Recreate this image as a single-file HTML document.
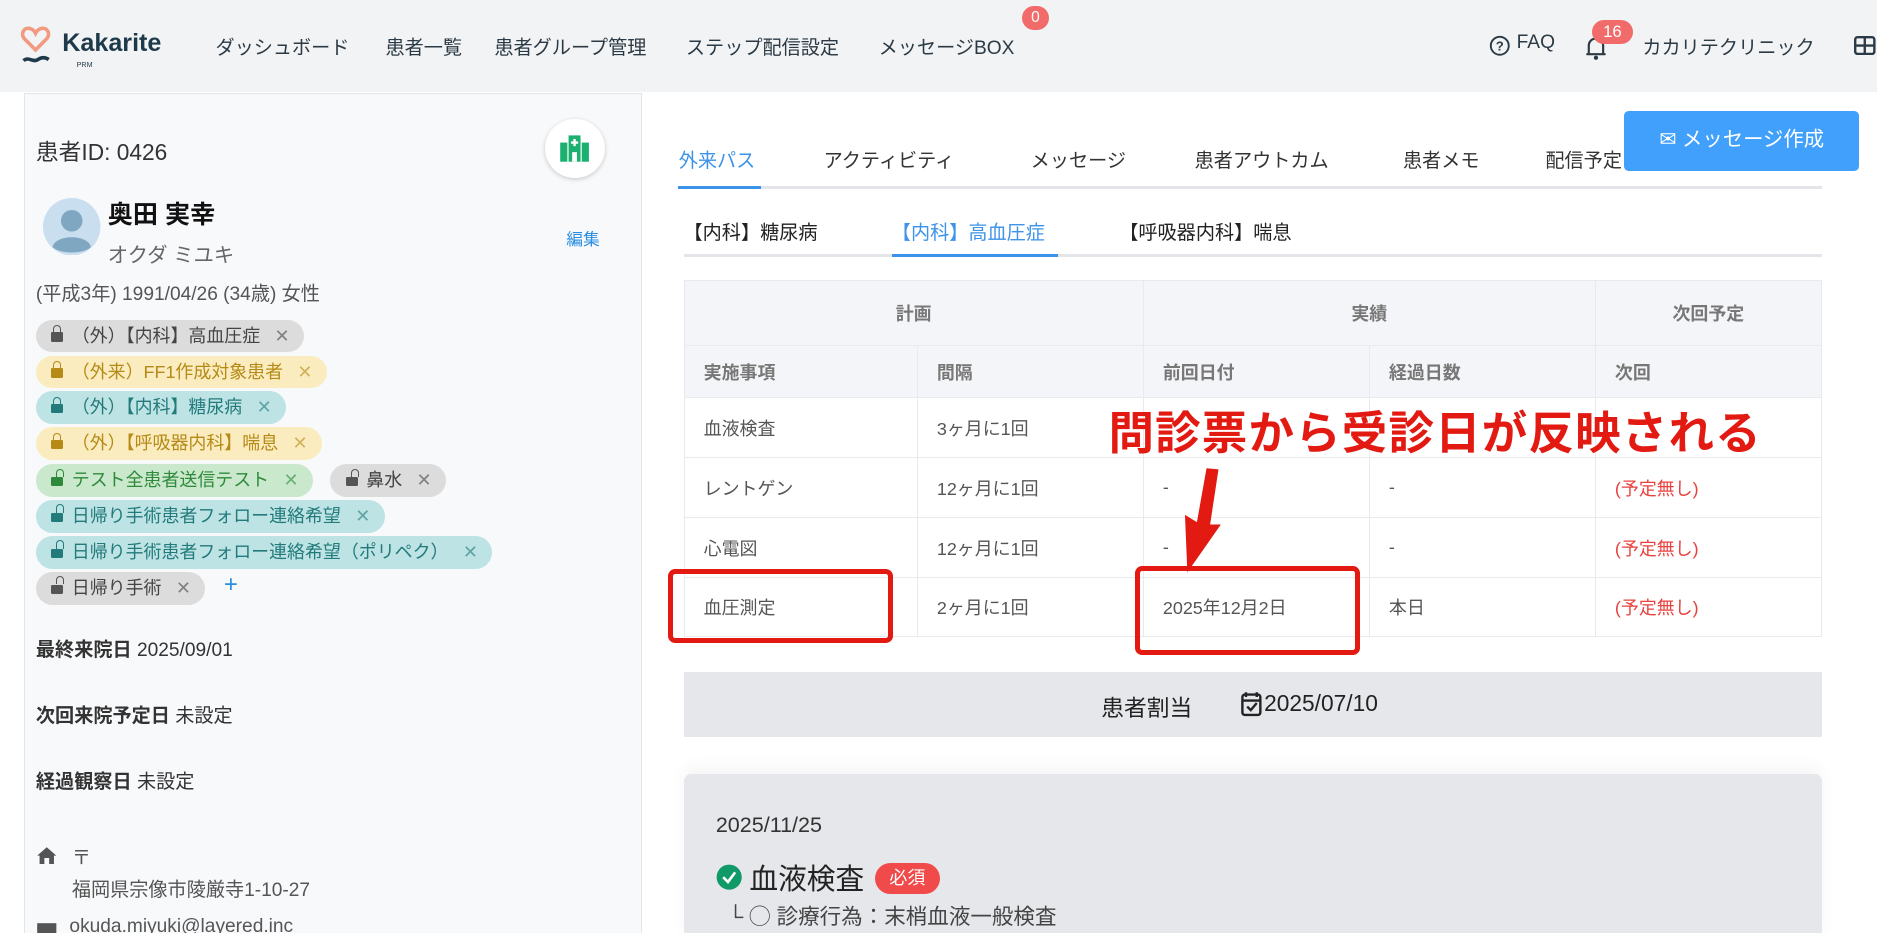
<!DOCTYPE html>
<html><head><meta charset="utf-8"><style>
html,body{margin:0;padding:0;width:1877px;height:933px;overflow:hidden;background:#fff}
#w{zoom:1.19706;width:1568px;height:780px;position:relative;overflow:hidden;font-family:"Liberation Sans","Noto Sans CJK JP",sans-serif;color:#333}
.a{position:absolute;white-space:nowrap}
.hd{left:0;top:0;width:1568px;height:77px;background:#f2f3f5}
.nav{font-size:16px;color:#2b3a44;top:27px}
.lp{left:20px;top:78px;width:515px;height:720px;background:#f8f9fb;border:1px solid #e3e5e8}
.tag{position:absolute;height:27px;line-height:27px;border-radius:14px;font-size:15px;padding:0 12px 0 13px;white-space:nowrap}
.tag i{font-style:normal;margin-left:12px;opacity:.6}
.lk{display:inline-block;width:10px;height:8px;border-radius:1px;position:relative;margin-right:7px;top:0}
.lk:before{content:"";position:absolute;left:1.5px;top:-6px;width:5px;height:6px;border:1.6px solid currentColor;border-bottom:none;border-radius:4px 4px 0 0}
.ul:before{left:4px;top:-7px}
.g{background:#dcdcdc;color:#444}.y{background:#fbecbf;color:#b58a16}.t{background:#bde3e5;color:#227a7a}.gr{background:#c9e8cc;color:#2e8a3a}
.tab{font-size:16px;top:121px;color:#333}
table{border-collapse:collapse;position:absolute;left:571px;top:234px;width:951px;font-size:15px}
td{border:1px solid #e8eaee;padding:0 16px;color:#555}
th{border:1px solid #e8eaee;background:#f4f5f8;color:#777;font-weight:bold;text-align:left;padding:0 16px;font-size:15px}
.red{color:#e8413f}
.box{position:absolute;border:5px solid #e21a12;border-radius:6px}
</style></head><body><div id="w">
<div class="a hd"></div>
<svg class="a" style="left:17px;top:22px" width="28" height="34" viewBox="0 0 28 34"><path d="M13 20 L4 11 C0 7 3 1 8 2 C10 2.5 12 4 13 6 C14 4 16 2.5 18 2 C23 1 26 7 22 11 Z" fill="none" stroke="#f19a80" stroke-width="3"/><path d="M3 29 C7 25 11 31 15 28 C18 26 21 26 24 28" fill="none" stroke="#1e3a4a" stroke-width="3"/></svg>
<div class="a" style="left:52px;top:24px;font-size:21px;font-weight:bold;color:#1e3a4a">Kakarite</div>
<div class="a" style="left:64px;top:51px;font-size:6px;color:#1e3a4a">PRM</div>
<div class="a nav" style="left:180px">ダッシュボード</div>
<div class="a nav" style="left:322px">患者一覧</div>
<div class="a nav" style="left:413px">患者グループ管理</div>
<div class="a nav" style="left:573px">ステップ配信設定</div>
<div class="a nav" style="left:734px">メッセージBOX</div>
<div class="a" style="left:854px;top:5px;width:22px;height:20px;border-radius:10px;background:#f26b6b;color:#fff;font-size:13px;text-align:center;line-height:20px">0</div>
<svg class="a" style="left:1244px;top:29px" width="18" height="18" viewBox="0 0 18 18"><circle cx="9" cy="9" r="7.5" fill="none" stroke="#2b3a44" stroke-width="1.6"/><text x="9" y="13" font-size="11" text-anchor="middle" fill="#2b3a44" font-family="Liberation Sans" font-weight="bold">?</text></svg>
<div class="a nav" style="left:1267px">FAQ</div>
<svg class="a" style="left:1323px;top:29px" width="20" height="22" viewBox="0 0 20 22"><path d="M4 16 V9 C4 5 7 3 10 3 C13 3 16 5 16 9 V16 H18 H2 Z" fill="none" stroke="#2b3a44" stroke-width="1.8"/><circle cx="10" cy="19" r="1.8" fill="#2b3a44"/></svg>
<div class="a" style="left:1330px;top:17px;width:34px;height:20px;border-radius:10px;background:#f26b6b;color:#fff;font-size:14px;text-align:center;line-height:20px">16</div>
<div class="a nav" style="left:1372px">カカリテクリニック</div>
<svg class="a" style="left:1549px;top:30px" width="18" height="16"><rect x="1" y="1" width="16" height="14" rx="2" fill="none" stroke="#2b3a44" stroke-width="2"/><path d="M9 1V15M1 8H17" stroke="#2b3a44" stroke-width="2"/></svg>

<div class="a lp"></div>
<div class="a" style="left:30px;top:112px;font-size:19px;color:#333">患者ID: 0426</div>
<div class="a" style="left:455px;top:99px;width:50px;height:50px;border-radius:50%;background:#fff;box-shadow:0 1px 4px rgba(0,0,0,.2)"></div>
<svg class="a" style="left:467px;top:111px" width="26" height="26" viewBox="0 0 26 26"><rect x="8" y="2" width="10" height="22" fill="#1bb070"/><rect x="1" y="8" width="6" height="16" fill="#1bb070"/><rect x="19" y="8" width="6" height="16" fill="#1bb070"/><path d="M13 5V11M10 8H16" stroke="#fff" stroke-width="2"/><rect x="11" y="16" width="4" height="8" fill="#fff"/></svg>
<svg class="a" style="left:36px;top:165px" width="48" height="48"><circle cx="24" cy="24" r="24" fill="#c9dff0"/><circle cx="24" cy="19" r="9" fill="#7fa7c2"/><path d="M8 41 C10 30 38 30 40 41 C34 47 14 47 8 41Z" fill="#7fa7c2"/></svg>
<div class="a" style="left:90px;top:163px;font-size:21px;font-weight:bold;color:#111">奥田 実幸</div>
<div class="a" style="left:90px;top:199px;font-size:17px;color:#666">オクダ ミユキ</div>
<div class="a" style="left:473px;top:189px;font-size:14px;color:#2a8ee0">編集</div>
<div class="a" style="left:30px;top:232px;font-size:16px;color:#555">(平成3年) 1991/04/26 (34歳) 女性</div>

<div class="tag g" style="left:30px;top:267px"><span class="lk" style="background:#555;color:#555"></span>（外）【内科】高血圧症<i>✕</i></div>
<div class="tag y" style="left:30px;top:297px"><span class="lk" style="background:#b58a16;color:#b58a16"></span>（外来）FF1作成対象患者<i>✕</i></div>
<div class="tag t" style="left:30px;top:327px"><span class="lk" style="background:#227a7a;color:#227a7a"></span>（外）【内科】糖尿病<i>✕</i></div>
<div class="tag y" style="left:30px;top:357px"><span class="lk" style="background:#b58a16;color:#b58a16"></span>（外）【呼吸器内科】喘息<i>✕</i></div>
<div class="tag gr" style="left:30px;top:388px"><span class="lk ul" style="background:#2e8a3a;color:#2e8a3a"></span>テスト全患者送信テスト<i>✕</i></div>
<div class="tag g" style="left:276px;top:388px"><span class="lk ul" style="background:#555;color:#555"></span>鼻水<i>✕</i></div>
<div class="tag t" style="left:30px;top:418px"><span class="lk ul" style="background:#227a7a;color:#227a7a"></span>日帰り手術患者フォロー連絡希望<i>✕</i></div>
<div class="tag t" style="left:30px;top:448px"><span class="lk ul" style="background:#227a7a;color:#227a7a"></span>日帰り手術患者フォロー連絡希望（ポリペク）<i>✕</i></div>
<div class="tag g" style="left:30px;top:478px"><span class="lk ul" style="background:#555;color:#555"></span>日帰り手術<i>✕</i></div>
<div class="a" style="left:187px;top:477px;font-size:20px;color:#2a8ee0">+</div>

<div class="a" style="left:30px;top:530px;font-size:16px;color:#333"><b>最終来院日</b> 2025/09/01</div>
<div class="a" style="left:30px;top:585px;font-size:16px;color:#333"><b>次回来院予定日</b> 未設定</div>
<div class="a" style="left:30px;top:640px;font-size:16px;color:#333"><b>経過観察日</b> 未設定</div>
<svg class="a" style="left:30px;top:707px" width="18" height="16"><path d="M9 1 L1 8 H3 V15 H7 V10 H11 V15 H15 V8 H17 Z" fill="#555"/></svg>
<div class="a" style="left:60px;top:703px;font-size:16px;color:#555">〒</div>
<div class="a" style="left:60px;top:730px;font-size:16px;color:#555">福岡県宗像市陵厳寺1-10-27</div>
<svg class="a" style="left:30px;top:770px" width="18" height="14"><rect x="1" y="1" width="16" height="12" fill="#555"/></svg>
<div class="a" style="left:58px;top:765px;font-size:16px;color:#555">okuda.miyuki@layered.inc</div>

<div class="a" style="left:566px;top:155px;width:956px;height:3px;background:#e3e5e8"></div>
<div class="a" style="left:566px;top:155px;width:70px;height:3px;background:#3d92ea"></div>
<div class="a tab" style="left:567px;color:#3d92ea">外来パス</div>
<div class="a tab" style="left:688px">アクティビティ</div>
<div class="a tab" style="left:861px">メッセージ</div>
<div class="a tab" style="left:998px">患者アウトカム</div>
<div class="a tab" style="left:1172px">患者メモ</div>
<div class="a tab" style="left:1291px">配信予定</div>
<div class="a" style="left:1357px;top:93px;width:196px;height:50px;background:#41a0fb;border-radius:4px;color:#fff;font-size:17px;line-height:50px;text-align:center">✉ メッセージ作成</div>

<div class="a" style="left:571px;top:212px;width:951px;height:3px;background:#e3e5e8"></div>
<div class="a" style="left:745px;top:212px;width:139px;height:3px;background:#3d92ea"></div>
<div class="a" style="left:571px;top:181px;font-size:16px;color:#222">【内科】糖尿病</div>
<div class="a" style="left:745px;top:181px;font-size:16px;color:#3d92ea">【内科】高血圧症</div>
<div class="a" style="left:935px;top:181px;font-size:16px;color:#222">【呼吸器内科】喘息</div>

<table>
<tr style="height:54px"><th colspan="2" style="text-align:center">計画</th><th colspan="2" style="text-align:center">実績</th><th style="text-align:center">次回予定</th></tr>
<tr style="height:44px"><th style="width:162px">実施事項</th><th style="width:156px">間隔</th><th style="width:156px">前回日付</th><th style="width:156px">経過日数</th><th>次回</th></tr>
<tr style="height:50px"><td>血液検査</td><td>3ヶ月に1回</td><td></td><td></td><td class="red"></td></tr>
<tr style="height:50px"><td>レントゲン</td><td>12ヶ月に1回</td><td>-</td><td>-</td><td class="red">(予定無し)</td></tr>
<tr style="height:50px"><td>心電図</td><td>12ヶ月に1回</td><td>-</td><td>-</td><td class="red">(予定無し)</td></tr>
<tr style="height:49px"><td>血圧測定</td><td>2ヶ月に1回</td><td>2025年12月2日</td><td>本日</td><td class="red">(予定無し)</td></tr>
</table>
<div class="box" style="left:558px;top:475px;width:180px;height:54px"></div>
<div class="box" style="left:948px;top:473px;width:180px;height:66px"></div>
<div class="a" style="left:926px;top:338px;font-size:38px;font-weight:bold;color:#e21a12;letter-spacing:1px;line-height:48px">問診票から受診日が反映される</div>
<svg class="a" style="left:980px;top:390px" width="45" height="90"><path d="M38 2 L31 48 L40 48 L12 88 L10 40 L20 46 L28 1 Z" fill="#e21a12"/></svg>

<div class="a" style="left:571px;top:561px;width:951px;height:55px;background:#e5e7eb"></div>
<div class="a" style="left:920px;top:576px;font-size:19px;color:#222">患者割当</div>
<svg class="a" style="left:1036px;top:577px" width="20" height="22"><rect x="2" y="3" width="15" height="17" rx="2" fill="none" stroke="#222" stroke-width="2"/><path d="M5 1V5M14 1V5M2 8H17M6 13L9 16L14 10" stroke="#222" stroke-width="2" fill="none"/></svg>
<div class="a" style="left:1056px;top:576px;font-size:19px;color:#222">2025/07/10</div>

<div class="a" style="left:571px;top:647px;width:951px;height:140px;background:#e5e7eb;border-radius:6px;box-shadow:0 -6px 14px rgba(0,0,0,.04)"></div>
<div class="a" style="left:598px;top:679px;font-size:18px;color:#333">2025/11/25</div>
<svg class="a" style="left:598px;top:722px" width="22" height="22"><circle cx="11" cy="11" r="10.5" fill="#0f9a68"/><path d="M6 11L10 15L16 7" stroke="#fff" stroke-width="2.2" fill="none"/></svg>
<div class="a" style="left:626px;top:716px;font-size:24px;color:#222">血液検査</div>
<div class="a" style="left:731px;top:721px;width:54px;height:26px;border-radius:13px;background:#f14a4a;color:#fff;font-size:15px;text-align:center;line-height:26px">必須</div>
<div class="a" style="left:608px;top:752px;font-size:18px;color:#444">└ ◯ 診療行為：末梢血液一般検査</div>
</div></body></html>
